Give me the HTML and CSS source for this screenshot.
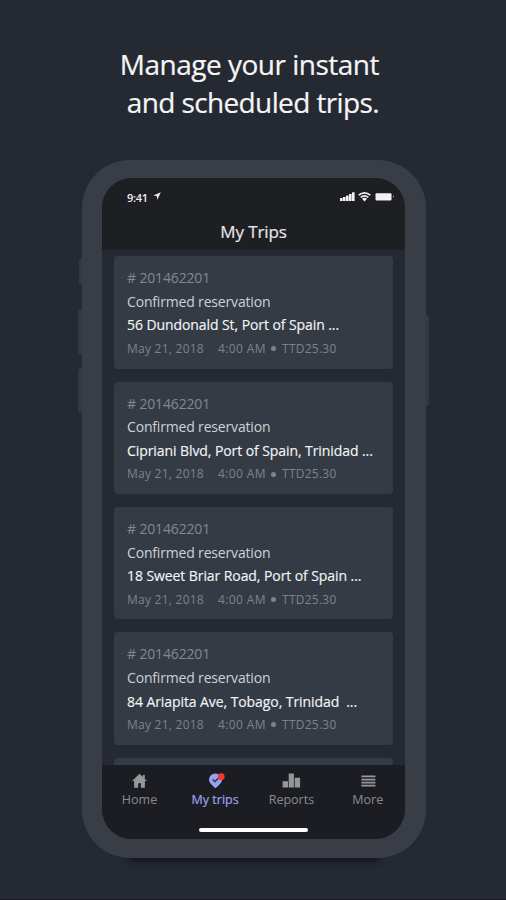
FILE: index.html
```html
<!DOCTYPE html>
<html lang="en">
<head>
  <meta charset="UTF-8">
  <meta name="viewport" content="width=device-width, initial-scale=1.0">
  <title>My Trips</title>
  <link rel="stylesheet" href="styles.css">
</head>
<body>

  <h1 class="headline"><span class="line-one">Manage your instant</span><br><span class="line-two">and scheduled trips.</span></h1>

  <div class="phone">
    <i class="side-btn mute"></i>
    <i class="side-btn vol-up"></i>
    <i class="side-btn vol-down"></i>
    <i class="side-btn power"></i>

    <div class="screen">
      <header class="top">
        <div class="status">
          <span class="time">9:41</span>
          <svg class="loc" width="8" height="8" viewBox="0 0 8 8"><path d="M7.8 .2L.2 3.4l3.5.7.7 3.6z" fill="#e8e8ea"/></svg>
          <svg class="signals" width="55" height="12" viewBox="0 0 55 12">
            <g fill="#f2f2f2">
              <rect x="0" y="7" width="2.6" height="3"/>
              <rect x="3" y="6" width="2.6" height="4"/>
              <rect x="6" y="4.6" width="2.6" height="5.4"/>
              <rect x="9" y="3" width="2.6" height="7"/>
              <rect x="12" y="1.3" width="2.6" height="8.7"/>
              <path d="M24.5 10.5l-2.5-2.8q2.5-1.8 5 0z"/>
              <rect x="35.5" y="2.2" width="16" height="7.4" rx="1"/>
              <path d="M53 4.3q1.4 1.4 0 2.8z"/>
            </g>
            <path d="M18.7 4.1q5.8-4.6 11.6 0M20.7 6.3q3.8-3 7.6 0" fill="none" stroke="#f2f2f2" stroke-width="1.7"/>
          </svg>
        </div>
        <h2 class="title">My Trips</h2>
      </header>

      <main class="trips">
        <article class="card">
          <p class="number"># 201462201</p>
          <p class="state">Confirmed reservation</p>
          <p class="address">56 Dundonald St, Port of Spain ...</p>
          <p class="meta"><span class="date">May 21, 2018</span><span class="hour">4:00 AM</span><i class="dot"></i><span class="price">TTD25.30</span></p>
        </article>
        <article class="card">
          <p class="number"># 201462201</p>
          <p class="state">Confirmed reservation</p>
          <p class="address">Cipriani Blvd, Port of Spain, Trinidad ...</p>
          <p class="meta"><span class="date">May 21, 2018</span><span class="hour">4:00 AM</span><i class="dot"></i><span class="price">TTD25.30</span></p>
        </article>
        <article class="card">
          <p class="number"># 201462201</p>
          <p class="state">Confirmed reservation</p>
          <p class="address">18 Sweet Briar Road, Port of Spain ...</p>
          <p class="meta"><span class="date">May 21, 2018</span><span class="hour">4:00 AM</span><i class="dot"></i><span class="price">TTD25.30</span></p>
        </article>
        <article class="card">
          <p class="number"># 201462201</p>
          <p class="state">Confirmed reservation</p>
          <p class="address">84 Ariapita Ave, Tobago, Trinidad&nbsp; ...</p>
          <p class="meta"><span class="date">May 21, 2018</span><span class="hour">4:00 AM</span><i class="dot"></i><span class="price">TTD25.30</span></p>
        </article>
        <article class="card"></article>
      </main>

      <footer class="bottom">
        <nav class="tabs">
          <a class="tab home">
            <svg width="20" height="18" viewBox="0 0 20 18"><path d="M9.5 1.8L2 9h2.1v6.7h4v-4.5h2.8v4.5h4V9H17l-2.2-2.1V3h-2v2z" fill="#96979b"/></svg>
            <span>Home</span>
          </a>
          <a class="tab active">
            <svg width="20" height="18" viewBox="0 0 20 18">
              <path d="M10.5 16.2C6.7 12.9 4 10.6 4 7.5a6.5 6 0 0 1 13 0c0 3.1-2.7 5.4-6.5 8.7z" fill="#98a2f0"/>
              <path d="M7.7 7.4l2.2 2.2 4-4" fill="none" stroke="#3a3f68" stroke-width="1.5"/>
              <circle cx="16.2" cy="4.7" r="3.4" fill="#f33a30"/>
            </svg>
            <span>My trips</span>
          </a>
          <a class="tab reports">
            <svg width="20" height="18" viewBox="0 0 20 18"><path d="M1.6 9.3h5.4v6.3H1.6zM7.7 1.6h5.2v14H7.7zM13.7 5.8h5.4v9.8h-5.4z" fill="#96979b"/></svg>
            <span>Reports</span>
          </a>
          <a class="tab more">
            <svg width="20" height="18" viewBox="0 0 20 18"><path d="M3.4 3.6h14v1.7h-14zM3.4 6.7h14v1.7h-14zM3.4 9.8h14v1.7h-14zM3.4 12.7h14v1.7h-14z" fill="#96979b"/></svg>
            <span>More</span>
          </a>
        </nav>
        <div class="home-bar"></div>
      </footer>
    </div>
  </div>

</body>
</html>
```
FILE: styles.css
```css
* { box-sizing: border-box; }
body {
  margin: 0; height: 900px; overflow: hidden;
  background: #252932; border-bottom: 1px solid #1b1823;
  font-family: "Open Sans", "Noto Sans", sans-serif;
}
h1, h2, p { margin: 0; font-weight: 400; }
.headline {
  height: 160px; padding: 45px 127px 0 0;
  font-size: 28px; line-height: 38px; color: #f5f5f5;
  text-align: right; white-space: nowrap;
  -webkit-text-stroke: 0.2px #f5f5f5;
}
.line-one { letter-spacing: -0.5px; }
.line-two { letter-spacing: -0.62px; }
.phone {
  position: relative; width: 344px; height: 698px;
  margin-left: 82px; padding: 18px 21px 18px 20px;
  background: #393d45; border-radius: 48px;
}
.phone::before {
  content: ""; position: absolute; z-index: -1;
  left: 46px; right: 46px; bottom: -3px; height: 20px;
  border-radius: 8px;
  background: #171a20; box-shadow: 0 0 6px 2px #191c22;
}
.side-btn {
  position: absolute; width: 6px; left: -4px;
  background: #343840; border-radius: 3px; z-index: -1;
}
.mute { top: 98px; height: 27px; left: -3px; }
.vol-up { top: 149px; height: 46px; }
.vol-down { top: 208px; height: 45px; }
.power { top: 155px; height: 91px; left: 341px; }

.screen {
  height: 661px; display: flex; flex-direction: column;
  background: #252932; border-radius: 30px; overflow: hidden;
}
.top { height: 72px; flex: none; background: #1d1f23; }
.status {
  height: 32px; padding: 8px 10px 0 25px;
  display: flex; align-items: flex-start; color: #f0f0f0;
}
.time { font-size: 11px; line-height: 24px; font-weight: 600; letter-spacing: -0.3px; }
.loc { margin: 6px 0 0 5px; }
.signals { margin: 5px 0 0 auto; }
.title {
  font-size: 17px; line-height: 43px; color: #e6e6e8; text-align: center;
  letter-spacing: -0.1px; -webkit-text-stroke: 0.2px #e6e6e8;
}

.trips {
  flex: 1; min-height: 0; overflow: hidden;
  padding: 6.2px 12px 0; display: flex; flex-direction: column; gap: 13px;
}
.card {
  flex: none; height: 112.4px; padding: 10px 13px;
  background: #353b45; border-radius: 4px;
}
.card p { height: 23.6px; line-height: 24px; font-size: 14px; white-space: nowrap; }
.card .number { color: #85878e; letter-spacing: -0.15px; }
.card .state { color: #cfd1d6; letter-spacing: -0.17px; }
.card .address {
  color: #f3f4f6; letter-spacing: -0.08px;
  -webkit-text-stroke: 0.15px #f3f4f6;
}
.card .meta {
  display: flex; align-items: center;
  font-size: 12px; color: #7f828a; letter-spacing: 0.25px;
}
.hour { margin-left: 14px; letter-spacing: 0.4px; }
.dot { width: 5px; height: 5px; margin: 0 6px 0 5px; border-radius: 50%; background: #7f828a; }

.bottom { height: 74px; flex: none; background: #1c1d22; }
.tabs { display: flex; height: 61px; }
.tab {
  width: 76.3px; flex: none; display: flex; flex-direction: column; align-items: center;
  padding-top: 7px; font-size: 12.5px; line-height: 20px; color: #8b8c90;
}
.tab.home { width: 75px; }
.tab svg { flex: none; }
.active { color: #9aa1ee; }
.active span { -webkit-text-stroke: 0.2px #9aa1ee; }
.home-bar {
  width: 109px; height: 4px; margin: 2px auto 0;
  background: #fff; border-radius: 2px;
}
```
